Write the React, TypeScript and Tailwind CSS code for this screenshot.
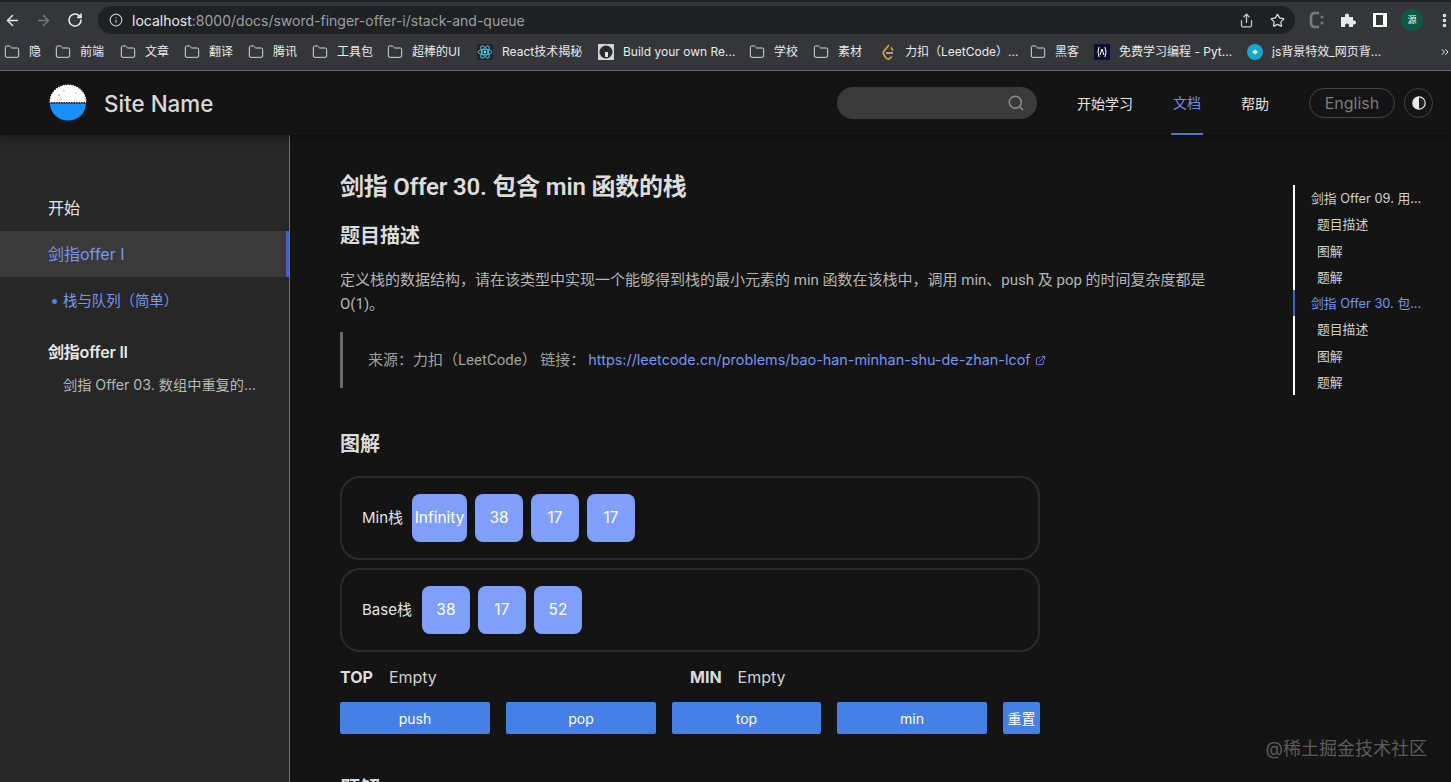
import { ArrowLeft, ArrowRight, ChevronsRight, Folder, Info, RotateCw, Search, Share, Star, ExternalLink, MoreVertical } from "lucide-react"

const font = "font-['Inter','Noto_Sans_CJK_SC',sans-serif]"
const bodyFont = "font-['Roboto','Noto_Sans_CJK_SC',sans-serif]"

const bookmarks: { label: string; icon: "folder" | "react" | "photo" | "leet" | "py" | "js"; gap: string }[] = [
  { label: "隐", icon: "folder", gap: "w-[51px]" },
  { label: "前端", icon: "folder", gap: "w-[65px]" },
  { label: "文章", icon: "folder", gap: "w-[64px]" },
  { label: "翻译", icon: "folder", gap: "w-[64px]" },
  { label: "腾讯", icon: "folder", gap: "w-[64px]" },
  { label: "工具包", icon: "folder", gap: "w-[75px]" },
  { label: "超棒的UI", icon: "folder", gap: "w-[90px]" },
  { label: "React技术揭秘", icon: "react", gap: "w-[121px]" },
  { label: "Build your own Re...", icon: "photo", gap: "w-[151px]" },
  { label: "学校", icon: "folder", gap: "w-[64px]" },
  { label: "素材", icon: "folder", gap: "w-[67px]" },
  { label: "力扣（LeetCode）...", icon: "leet", gap: "w-[150px]" },
  { label: "黑客", icon: "folder", gap: "w-[64px]" },
  { label: "免费学习编程 - Pyt...", icon: "py", gap: "w-[153px]" },
  { label: "js背景特效_网页背...", icon: "js", gap: "w-[193px]" },
]

const BookmarkIcon = ({ type }: { type: string }) => {
  if (type === "folder") return <Folder size={16} strokeWidth={1.4} className="text-[#e3e3e3] shrink-0" />
  if (type === "react")
    return (
      <svg width="16" height="16" viewBox="0 0 16 16" className="shrink-0 bg-[#20232a]">
        <g fill="none" stroke="#61dafb" strokeWidth="0.8">
          <ellipse cx="8" cy="8" rx="7" ry="2.8" />
          <ellipse cx="8" cy="8" rx="7" ry="2.8" transform="rotate(60 8 8)" />
          <ellipse cx="8" cy="8" rx="7" ry="2.8" transform="rotate(120 8 8)" />
        </g>
        <circle cx="8" cy="8" r="1.4" fill="#61dafb" />
      </svg>
    )
  if (type === "photo")
    return (
      <svg width="16" height="16" viewBox="0 0 16 16" className="shrink-0">
        <rect width="16" height="16" fill="#cfd4d8" />
        <circle cx="8" cy="8" r="6.5" fill="#2a2a2a" />
        <rect x="7" y="8" width="3" height="5" fill="#e8e2c8" />
      </svg>
    )
  if (type === "leet")
    return (
      <svg width="16" height="16" viewBox="0 0 16 16" className="shrink-0" fill="none" strokeWidth="1.6">
        <path d="M9 1 L4 7 Q2.5 9 4 11 L6 14 Q7.5 15.5 9.5 14.5 L12 12.5" stroke="#e7a13b" />
        <path d="M11 3.5 L13 6.5" stroke="#e7a13b" />
        <path d="M6 9 H13" stroke="#b9b9b9" />
      </svg>
    )
  if (type === "py")
    return (
      <svg width="16" height="16" viewBox="0 0 16 16" className="shrink-0">
        <rect width="16" height="16" fill="#0d1033" />
        <path d="M5 3 Q3 8 5 13 M11 3 Q13 8 11 13 M6 11 L8 5 L10 11" fill="none" stroke="#fff" strokeWidth="1" />
      </svg>
    )
  return (
    <svg width="16" height="16" viewBox="0 0 16 16" className="shrink-0">
      <circle cx="8" cy="8" r="8" fill="#1aa6c9" />
      <path d="M5 8 L8 5.5 L11 8 L8 10.5 Z" fill="#dff6fb" />
    </svg>
  )
}

const BrowserChrome = () => (
  <div className={`bg-[#35363a] border-b border-[#77787a] h-[71px] shrink-0 flex flex-col ${font}`}>
    <div className="h-[2px] bg-[#202124]" />
    <div className="h-[32px] flex items-center pt-[4px]">
      <ArrowLeft size={17} strokeWidth={2} className="text-[#e8eaed] ml-[4px] shrink-0" />
      <ArrowRight size={17} strokeWidth={2} className="text-[#77797c] ml-[14px] shrink-0" />
      <RotateCw size={16} strokeWidth={2.4} className="text-[#e8eaed] ml-[15px] shrink-0" />
      <div className="ml-[15px] w-[1197px] shrink-0 h-[28px] rounded-full bg-[#202124] flex items-center pl-[11px] pr-[10px]">
        <Info size={14} className="text-[#bdc1c6]" />
        <div className="ml-[9px] text-[14px] text-[#9aa0a6]">
          <span className="text-[#e8eaed]">localhost</span>:8000/docs/sword-finger-offer-i/stack-and-queue
        </div>
        <div className="ml-auto flex items-center gap-[16px]">
          <Share size={15} className="text-[#c4c7c5]" />
          <Star size={15} className="text-[#dadce0]" />
        </div>
      </div>
      <div className="ml-[14px] flex items-center shrink-0">
        <svg width="16" height="18" viewBox="0 0 16 18" fill="none" className="shrink-0">
          <path d="M10 2 H6 Q2 2 2 6 V12 Q2 16 6 16 H10" stroke="#77797c" strokeWidth="2.6" />
          <circle cx="13" cy="6" r="1.5" fill="#77797c" />
          <circle cx="13" cy="12" r="1.5" fill="#77797c" />
        </svg>
        <svg width="16" height="16" viewBox="0 0 16 16" className="ml-[15px] shrink-0">
          <path d="M1 5 H5 V3.5 a2 2 0 0 1 4 0 V5 H13 V8.5 h1 a2 2 0 0 1 0 4 h-1 V15 H9 v-1.5 a2 2 0 0 0 -4 0 V15 H1 Z" fill="#e8eaed" />
        </svg>
        <div className="ml-[17px] w-[14px] h-[14px] border-[2px] border-white border-r-[4px] border-l-[3px]" />
        <div className="ml-[14px] w-[22px] h-[22px] rounded-full bg-[#0b5a47] flex items-center justify-center text-[9px] text-white">源</div>
        <MoreVertical size={17} strokeWidth={3} className="text-[#e8eaed] ml-[13px] shrink-0" />
      </div>
    </div>
    <div className="flex-1 flex items-center pl-[4px] text-[12px] text-[#e8eaed] whitespace-nowrap">
      {bookmarks.map((b) => (
        <div key={b.label} className={`flex items-center gap-[9px] shrink-0 ${b.gap}`}>
          <BookmarkIcon type={b.icon} />
          <span>{b.label}</span>
        </div>
      ))}
      <ChevronsRight size={12} className="text-[#e8eaed] -ml-[1px]" />
    </div>
  </div>
)

const Logo = () => (
  <svg width="38" height="38" viewBox="0 0 38 38" className="shrink-0">
    <path d="M1 18 A18 17 0 0 1 37 18 Z" fill="#fff" stroke="#fff" strokeWidth="1.4" strokeDasharray="0.1 2.4" strokeLinecap="round" />
    <path d="M1 19.5 H37 A18 17 0 0 1 1 19.5 Z" fill="#1890ff" />
    <g fill="#666">
      <circle cx="10" cy="11" r="0.7" />
      <circle cx="15" cy="7" r="0.6" />
      <circle cx="12" cy="15" r="0.6" />
      <circle cx="27" cy="9" r="0.5" />
    </g>
  </svg>
)

const Header = () => (
  <header className="h-[64px] shrink-0 bg-[#141414] flex items-center pl-[49px] pr-[18px] shadow-[0_2px_8px_rgba(0,0,0,0.4)] z-10">
    <Logo />
    <span className="ml-[17px] pt-[1px] text-[22.4px] font-medium text-[#d8d8d8]">Site Name</span>
    <div className="ml-auto w-[200px] h-[32px] rounded-full bg-[#3a3a3a] flex items-center justify-end pr-[12px]">
      <Search size={18} className="text-[#8c8c8c]" />
    </div>
    <nav className="flex items-center h-full text-[14px] text-[#e3e3e3]">
      <span className="ml-[40px]">开始学习</span>
      <div className="ml-[38px] w-[32px] h-full flex items-center justify-center border-b-2 border-[#5b74c9] text-[#6f8de8]">文档</div>
      <span className="ml-[38px]">帮助</span>
    </nav>
    <div className="ml-[40px] w-[86px] h-[30px] rounded-full border border-[#434343] flex items-center justify-center text-[16px] text-[#7d7d7d]">English</div>
    <div className="ml-[9px] w-[29px] h-[30px] rounded-full border border-[#434343] flex items-center justify-center">
      <svg width="14" height="14" viewBox="0 0 14 14">
        <circle cx="7" cy="7" r="6.2" fill="#222" stroke="#e8e8e8" strokeWidth="1.2" />
        <path d="M7 .8 A6.2 6.2 0 0 0 7 13.2 Z" fill="#e8e8e8" />
      </svg>
    </div>
  </header>
)

const Sidebar = () => (
  <aside className="w-[290px] shrink-0 bg-[#272727] border-r border-[#6f6f6f] pt-[50px]">
    <div className="h-[46px] flex items-center pl-[48px] text-[16px] text-[#e6e6e6]">开始</div>
    <div className="h-[46px] flex items-center pl-[48px] text-[16px] text-[#7696f0] bg-[#3a3a3a] border-r-[3px] border-[#3f62c4]">剑指offer I</div>
    <div className="h-[48px] flex items-center pl-[52px] text-[14.4px] text-[#7696f0]">
      <span className="w-[5px] h-[5px] rounded-full bg-[#5a7be0] mr-[6px]" />
      栈与队列（简单）
    </div>
    <div className="mt-[5px] h-[44px] flex items-center pl-[48px] text-[16px] font-semibold tracking-[-0.2px] text-[#e6e6e6]">剑指offer II</div>
    <div className="pl-[63px] pr-[28px] text-[14.2px] text-[#b8b8b8] truncate">剑指 Offer 03. 数组中重复的...</div>
  </aside>
)

const Cell = ({ text, wide }: { text: string; wide?: boolean }) => (
  <div className={`h-[48px] rounded-[8px] bg-[#7f9ffb] flex items-center justify-center text-[15.5px] text-white ${wide ? "w-[55px]" : "w-[48px]"}`}>
    {text}
  </div>
)

const StackRow = ({ label, cells, gap }: { label: string; cells: string[]; gap: string }) => (
  <div className="h-[84px] rounded-[20px] border-2 border-[#2b2b2b] flex items-center pl-[20px]">
    <span className={`text-[15px] text-[#e3e3e3] ${gap}`}>{label}</span>
    <div className="flex gap-[8px]">
      {cells.map((c, i) => (
        <Cell key={i} text={c} wide={c === "Infinity"} />
      ))}
    </div>
  </div>
)

const ActionButton = ({ label, width }: { label: string; width: string }) => (
  <button className={`h-[32px] rounded-[2px] bg-[#4480e6] text-[14px] text-white ${width}`}>{label}</button>
)

const Content = () => (
  <main className="flex-1 min-w-0 bg-[#141414] pl-[50px] pt-[36px] overflow-hidden">
    <h1 className={`text-[24px] leading-[32px] font-semibold tracking-[-0.2px] text-[#dcdcdc] ${bodyFont}`}>剑指 Offer 30. 包含 min 函数的栈</h1>
    <h2 className="mt-[17px] text-[20px] leading-[32px] font-semibold text-[#dcdcdc]">题目描述</h2>
    <p className={`mt-[16px] w-[880px] text-[15px] leading-[24px] text-[#b4b4b4] ${bodyFont}`}>
      定义栈的数据结构，请在该类型中实现一个能够得到栈的最小元素的 min 函数在该栈中，调用 min、push 及 pop 的时间复杂度都是 O(1)。
    </p>
    <blockquote className={`mt-[16px] h-[56px] border-l-[3px] border-[#6a6a6a] pl-[25px] flex items-center text-[15px] text-[#a0a0a0] ${bodyFont}`}>
      来源：力扣（LeetCode） 链接：
      <span className={`ml-[3px] text-[14.4px] text-[#7696f0] ${font}`}>https://leetcode.cn/problems/bao-han-minhan-shu-de-zhan-lcof</span>
      <ExternalLink size={11} className="ml-[4px] text-[#7696f0]" />
    </blockquote>
    <h2 className="mt-[40px] text-[20px] leading-[32px] font-semibold text-[#dcdcdc]">图解</h2>
    <div className="mt-[16px] w-[700px] flex flex-col gap-[8px]">
      <StackRow label="Min栈" cells={["Infinity", "38", "17", "17"]} gap="mr-[9px]" />
      <StackRow label="Base栈" cells={["38", "17", "52"]} gap="mr-[10px]" />
      <div className="mt-[5px] flex text-[16px] leading-[24px] text-[#d0d0d0]">
        <div className="w-[350px] flex gap-[16px]"><b className="font-bold text-[#dcdcdc]">TOP</b><span>Empty</span></div>
        <div className="flex gap-[16px]"><b className="font-bold text-[#dcdcdc]">MIN</b><span>Empty</span></div>
      </div>
      <div className="mt-[5px] flex justify-between">
        <ActionButton label="push" width="w-[150px]" />
        <ActionButton label="pop" width="w-[150px]" />
        <ActionButton label="top" width="w-[149px]" />
        <ActionButton label="min" width="w-[150px]" />
        <ActionButton label="重置" width="w-[37px]" />
      </div>
    </div>
    <h2 className="mt-[39px] text-[20px] leading-[32px] font-semibold text-[#dcdcdc]">题解</h2>
  </main>
)

const tocItems = [
  { t: "剑指 Offer 09. 用...", top: true },
  { t: "题目描述" },
  { t: "图解" },
  { t: "题解" },
  { t: "剑指 Offer 30. 包...", top: true, active: true },
  { t: "题目描述" },
  { t: "图解" },
  { t: "题解" },
]

const Toc = () => (
  <div className="w-[158px] shrink-0 bg-[#141414] pt-[50px]">
    <div className="border-l-2 border-white w-full">
      {tocItems.map((i, n) => (
        <div
          key={n}
          className={`h-[26.25px] pt-[1px] flex items-center text-[12.8px] whitespace-nowrap -ml-[2px] border-l-2 ${i.active ? "border-[#3f62c4] text-[#7696f0]" : "border-transparent text-[#d0d0d0]"} ${i.top ? "pl-[16px]" : "pl-[22px]"}`}
        >
          {i.t}
        </div>
      ))}
    </div>
  </div>
)

export default function App() {
  return (
    <div className={`relative h-[782px] w-[1451px] overflow-hidden flex flex-col bg-[#141414] ${font}`}>
      <BrowserChrome />
      <Header />
      <div className="flex flex-1 min-h-0">
        <Sidebar />
        <Content />
        <Toc />
      </div>
      <div className="absolute right-[24px] bottom-[20px] text-[18px] text-[#5c5c5c]">@稀土掘金技术社区</div>
    </div>
  )
}
